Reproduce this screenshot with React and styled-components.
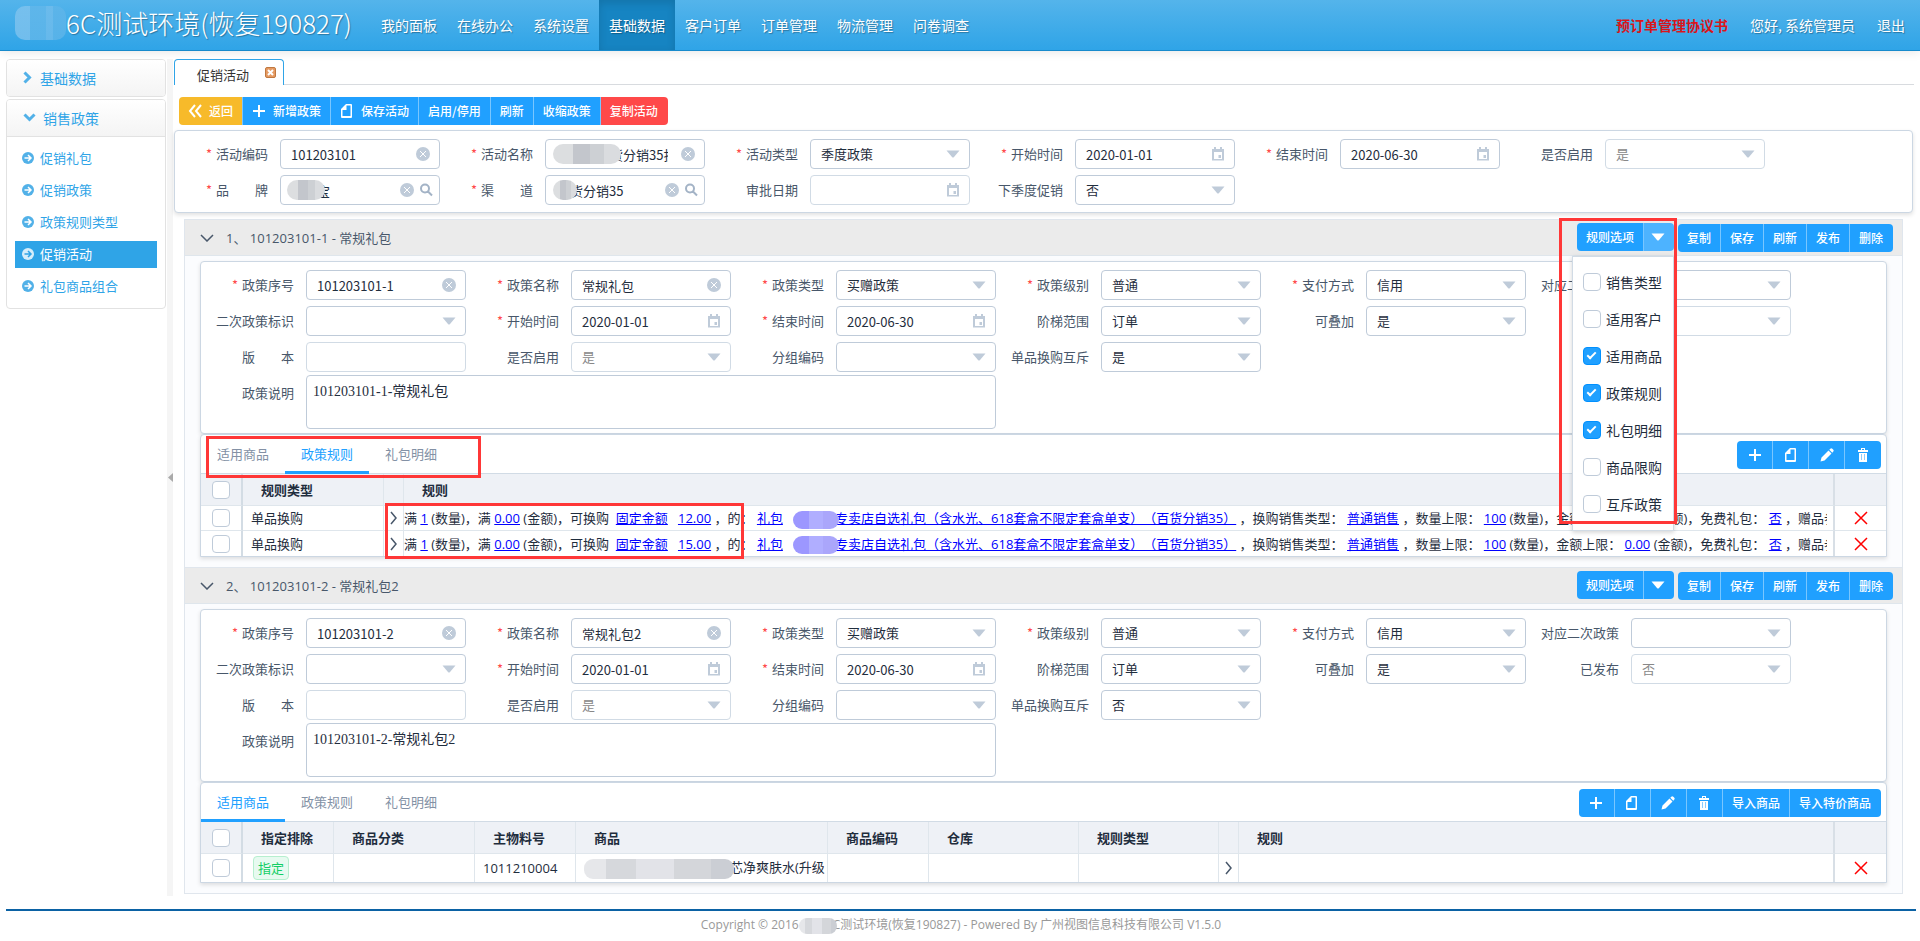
import React from "react";
import styled, { createGlobalStyle, css } from "styled-components";

const Global = createGlobalStyle`
  *, *::before, *::after { box-sizing: border-box; }
  body {
    margin: 0;
    background: #fff;
    color: #1f2d3d;
    font-family: "Noto Sans CJK SC", "Liberation Sans", sans-serif;
    font-size: 13px;
    line-height: 20px;
    text-spacing-trim: space-all;
  }
  button, input, select, textarea { font: inherit; color: inherit; margin: 0; }
  svg { display: block; flex: none; }
  ul { list-style: none; margin: 0; padding: 0; }
`;

const wideLatin = `"Open Sans", "Noto Sans CJK SC", sans-serif`;

/* ---------- header ---------- */
const Header = styled.header`
  display: flex;
  height: 51px;
  background: linear-gradient(#54b4eb, #2fa4e7);
  border-bottom: 1px solid #178acc;
  box-shadow: 0 1px 10px rgba(0, 0, 0, 0.1);
  color: #fff;
  font-size: 14px;
  text-shadow: 1px 1px 1px rgba(0, 0, 0, 0.3);
`;
const Brand = styled.div`
  display: flex;
  align-items: center;
  width: 371px;
  padding-left: 15px;
  padding-bottom: 4px;
  font-size: 26px;
  font-weight: 300;
  white-space: nowrap;
`;
const Nav = styled.nav`
  display: flex;
  flex: 1;
`;
const NavLink = styled.a`
  display: flex;
  align-items: center;
  padding: 0 10px;
  color: #fff;
  text-decoration: none;
  background: ${(p) => (p.$active ? "#1684c2" : "transparent")};
  box-shadow: ${(p) => (p.$active ? "inset 0 3px 8px rgba(0, 0, 0, 0.13)" : "none")};
`;
const UserBar = styled.div`
  display: flex;
  align-items: center;
  gap: 22px;
  padding-right: 15px;
  a { color: #fff; text-decoration: none; }
  a.notice { color: #d9151b; font-weight: bold; text-shadow: none; }
`;

/* ---------- frame ---------- */
const Frame = styled.div`
  display: flex;
  padding: 8px 6px 0;
`;
const Sidebar = styled.aside`
  width: 160px;
  flex: none;
`;
const SidePanel = styled.section`
  margin-bottom: 2px;
  border: 1px solid #e2e2e2;
  border-radius: 4px;
  overflow: hidden;
`;
const SideTitle = styled.a`
  display: flex;
  align-items: center;
  gap: ${(p) => (p.$open ? 7 : 8)}px;
  height: 36px;
  padding-left: 16px;
  padding-bottom: 1px;
  color: #2fa4e7;
  font-size: 14px;
  text-decoration: none;
  background: linear-gradient(#fff, #f4f4f4);
`;
const SideMenu = styled.ul`
  border-top: 1px solid #e2e2e2;
  padding: 8px 8px 3px;
`;
const SideLink = styled.a`
  display: flex;
  align-items: center;
  gap: 6px;
  height: 27px;
  margin: 0 0 5px;
  padding: 0 0 2px 7px;
  color: ${(p) => (p.$active ? "#fff" : "#2fa4e7")};
  background: ${(p) => (p.$active ? "#2fa4e7" : "transparent")};
  text-decoration: none;
`;
const Splitter = styled.div`
  display: flex;
  align-items: center;
  justify-content: center;
  width: 6px;
  margin: 0 1px;
  flex: none;
  background: #f5f5f5;
`;
const Content = styled.main`
  flex: 1;
  min-width: 0;
  padding-bottom: 2px;
`;
const TabBar = styled.div`
  display: flex;
  align-items: flex-end;
  border-bottom: 1px solid #d8dbdf;
`;
const PageTab = styled.div`
  display: flex;
  align-items: center;
  gap: 16px;
  height: 26px;
  margin-bottom: -1px;
  padding: 4px 7px 0 22px;
  background: #fff;
  border: 1px solid #2fa4e7;
  border-bottom: 0;
  border-radius: 4px 4px 0 0;
  color: #333;
`;
const TabClose = styled.button`
  display: flex;
  padding: 1px;
  margin-bottom: 4px;
  border: 1px solid #c07840;
  border-radius: 2px;
  background: #e59a62;
`;

/* ---------- buttons ---------- */
const Group = styled.div`
  display: inline-flex;
  flex: none;
  height: 28px;
  border-radius: 4px;
  overflow: hidden;
`;
const Button = styled.button`
  display: flex;
  align-items: center;
  justify-content: center;
  gap: 7px;
  padding: 0 ${(p) => (p.$iconOnly ? 0 : 9)}px;
  width: ${(p) => (p.$iconOnly ? "36px" : "auto")};
  border: 0;
  border-right: 1px solid #79c6ff;
  background: ${(p) => p.$color || "#20a0ff"};
  color: #fff;
  font-size: 12px;
  line-height: 20px;
  font-weight: 500;
  white-space: nowrap;
  &:last-child { border-right-color: transparent; }
`;
const Toolbar = styled.div`
  display: flex;
  padding: 12px 5px 5px;
`;

/* ---------- forms ---------- */
const Card = styled.div`
  border: 1px solid #ccd7e3;
  border-radius: 4px;
  background: #fff;
  box-shadow: 0 2px 4px rgba(0, 0, 0, 0.12);
`;
const FilterCard = styled(Card)`
  padding: 8px 0 7px;
  margin-right: 1px;
`;
const FormCard = styled(Card)`
  padding: 8px 0 4px;
`;
const FieldGrid = styled.div`
  display: grid;
  grid-template-columns: repeat(6, 265px);
  row-gap: 6px;
`;
const FieldBox = styled.div`
  display: flex;
  justify-content: flex-end;
  gap: 12px;
`;
const FieldLabel = styled.label`
  width: 104px;
  margin-left: -11px;
  text-align: right;
  line-height: 30px;
  color: #48576a;
  white-space: pre;
`;
const Star = styled.span`
  color: #ff4949;
  margin-right: 4px;
`;
const Control = styled.div`
  position: relative;
  width: 160px;
  height: 30px;
`;
const controlBase = css`
  appearance: none;
  display: block;
  width: 100%;
  height: 30px;
  padding: 0 36px 0 ${(p) => p.$indent || 10}px;
  border: 1px solid ${(p) => (p.disabled ? "#d1dbe5" : "#bfcbd9")};
  border-radius: 4px;
  background: #fff;
  color: ${(p) => (p.disabled ? "#888" : "#1f2d3d")};
  opacity: 1;
  outline: 0;
`;
const TextInput = styled.input`
  ${controlBase}
`;
const SelectBox = styled.select`
  ${controlBase}
`;
const Adorn = styled.span`
  position: absolute;
  top: 0;
  right: 7px;
  height: 30px;
  display: flex;
  align-items: center;
  gap: 2px;
  pointer-events: none;
`;
const NoteRow = styled.div`
  display: flex;
  gap: 12px;
  margin-top: 3px;
`;
const NoteLabel = styled(FieldLabel)`
  width: 93px;
  margin-left: 0;
  line-height: 36px;
`;
const Note = styled.textarea`
  display: block;
  width: 690px;
  height: 54px;
  padding: 5px 6px;
  border: 1px solid #bfcbd9;
  border-radius: 4px;
  resize: none;
  font-family: "Liberation Serif", "Noto Sans CJK SC", serif;
  font-size: 14px;
  line-height: 21px;
`;

/* censor patches */
const Patch = styled.span`
  position: absolute;
  left: ${(p) => p.$left}px;
  top: 5px;
  width: ${(p) => p.$width}px;
  height: 20px;
  border-radius: 10px;
  background: linear-gradient(90deg, #dcdee0 30%, #c3c6cc 30% 55%, #cdd0d4 55% 75%, #dadcdf 75%);
`;
const BrandPatch = styled.span`
  width: 51px;
  height: 34px;
  border-radius: 10px;
  background: linear-gradient(90deg, #80c3ee 30%, #62b7ea 30% 60%, #72bdec 60% 75%, #5fb5e9 75%);
  opacity: 0.8;
`;
const InlinePatch = styled.span`
  display: inline-block;
  position: relative;
  width: ${(p) => p.$width}px;
  height: ${(p) => p.$height}px;
  margin-right: -4px;
  vertical-align: middle;
  border-radius: 9px;
  background: ${(p) =>
    p.$grey
      ? "linear-gradient(90deg, #e6e7ea 15%, #d6d8dc 15% 35%, #e2e3e8 35% 60%, #d4d6da 60% 85%, #cbced4 85%)"
      : "linear-gradient(90deg, #9c97ff 35%, #b0aeff 35% 65%, #aaa6fb 65%)"};
`;

/* ---------- policies ---------- */
const PolicyList = styled.div`
  margin: 6px 11px 0 10px;
  border: 1px solid #e0e6ed;
  border-top: 0;
  background: #fbfcfe;
`;
const PolicyHead = styled.div`
  display: flex;
  align-items: center;
  height: 37px;
  padding: 0 9px 0 15px;
  border-top: 1px solid #e0e6ed;
  border-bottom: 1px solid #dfe6ec;
  background: #ebebeb;
  color: #48576a;
`;
const PolicyTitle = styled.h2`
  flex: 1;
  margin: 0 0 0 12px;
  font-family: ${wideLatin};
  font-size: 13px;
  font-weight: normal;
  white-space: pre;
`;
const SplitMenu = styled.div`
  position: relative;
  display: flex;
  margin: 0 4px 2px 0;
`;
const CaretButton = styled(Button)`
  width: 30px;
  padding: 0;
  background: ${(p) => (p.$open ? "#4db3ff" : "#20a0ff")};
`;
const OptionMenu = styled.ul`
  position: absolute;
  z-index: 3;
  top: 33px;
  right: 0;
  width: 102px;
  padding: 7px 0;
  border: 1px solid #d1dbe5;
  background: #fff;
  box-shadow: 0 2px 4px rgba(0, 0, 0, 0.12), 0 0 6px rgba(0, 0, 0, 0.06);
`;
const OptionLabel = styled.label`
  display: flex;
  align-items: center;
  gap: 5px;
  height: 37px;
  padding-left: 10px;
  color: #1f2d3d;
  font-size: 14px;
`;
const Check = styled.input.attrs({ type: "checkbox" })`
  appearance: none;
  position: relative;
  display: block;
  flex: none;
  width: 18px;
  height: 18px;
  border: 1px solid #bfcbd9;
  border-radius: 4px;
  background: #fff;
  &:checked { background: #20a0ff; border-color: #0190fe; }
  &:checked::after {
    content: "";
    position: absolute;
    left: 5px;
    top: 2px;
    width: 5px;
    height: 9px;
    border: solid #fff;
    border-width: 0 2px 2px 0;
    transform: rotate(45deg);
  }
`;
const Marker = styled.div`
  position: absolute;
  z-index: 4;
  left: ${(p) => p.$left}px;
  top: ${(p) => p.$top}px;
  width: ${(p) => p.$width}px;
  height: ${(p) => p.$height}px;
  border: 3px solid #ff3737;
  pointer-events: none;
`;
const PolicyBody = styled.div`
  padding: 5px 15px 10px;
`;
const DetailCard = styled(Card)`
  position: relative;
  border-bottom-left-radius: 0;
  border-bottom-right-radius: 0;
`;
const DetailTabs = styled.div`
  display: flex;
  height: 39px;
  padding-right: 5px;
  border-bottom: 1px solid #d1dbe5;
  ${Group} { margin: 6px 0 0 auto; }
`;
const DetailTab = styled.button`
  height: 39px;
  padding: 2px 16px 0;
  border: 0;
  border-bottom: 3px solid ${(p) => (p.$active ? "#20a0ff" : "transparent")};
  background: none;
  color: ${(p) => (p.$active ? "#20a0ff" : "#8391a5")};
`;

/* ---------- tables ---------- */
const Table = styled.table`
  width: 100%;
  table-layout: fixed;
  border-collapse: separate;
  border-spacing: 0;
  font-family: ${wideLatin};
  th, td {
    padding: 0 0 0 8px;
    text-align: left;
    white-space: nowrap;
    overflow: hidden;
    border-right: 1px solid #dfe6ec;
  }
  th {
    height: 32px;
    padding-left: 18px;
    background: #eef1f6;
    border-bottom: 1px solid #dfe6ec;
  }
  td {
    height: ${(p) => p.$row}px;
    border-bottom: 1px solid #dfe6ec;
  }
  tbody tr:last-child td { border-bottom: 0; }
  th:first-child, td:first-child { padding-left: 11px; border-right: 2px solid #d3dce4; }
  th:nth-last-child(2), td:nth-last-child(2) { border-right: 2px solid #d8dfe6; }
  th:last-child, td:last-child { border-right: 0; padding: 0; }
`;
const Rule = styled.div`
  margin-left: -8px;
  margin-right: 6px;
  overflow: hidden;
  white-space: pre;
  line-height: 22px;
  a { color: #00f; text-decoration: underline; }
`;
const Tag = styled.span`
  display: inline-block;
  height: 24px;
  margin-left: 2px;
  padding: 0 4px;
  border: 1px solid #b6efcf;
  border-radius: 4px;
  background: #e7faf0;
  color: #13ce66;
  line-height: 22px;
`;
const PlainButton = styled.button`
  display: flex;
  align-items: center;
  justify-content: center;
  width: 100%;
  padding: 0;
  border: 0;
  background: none;
`;
const Expander = styled(PlainButton)`
  width: 16px;
  margin-left: -6px;
`;

const Footer = styled.footer`
  margin: 13px 4px 0 6px;
  padding-top: 4px;
  border-top: 2px solid #0b62a4;
  text-align: center;
  color: #999;
  font-family: ${wideLatin};
  font-size: 12px;
`;

/* ---------- icons ---------- */
const Line = ({ d, w = 14, h = 14, color = "#fff", sw = 2, box }) => (
  <svg width={w} height={h} viewBox={box || `0 0 ${w} ${h}`} fill="none" stroke={color} strokeWidth={sw}>
    <path d={d} />
  </svg>
);
const ClearIcon = () => (
  <svg width="20" height="14" viewBox="-3 0 20 14">
    <circle cx="7" cy="7" r="7" fill="#bfcbd9" />
    <path d="M4 4l6 6M10 4l-6 6" stroke="#fff" strokeWidth="1" />
  </svg>
);
const SearchIcon = () => <Line w={14} h={14} color="#a3b3c6" sw={2} d="M10 5.500a4 4 0 1 1-8 0a4 4 0 1 1 8 0M9 8.500l4 4" />;
const CaretIcon = ({ color = "#bfcbd9" }) => (
  <svg width="20" height="8" viewBox="-3 0 20 8">
    <path d="M0.500 0.500h13L8 7q-1 1-2 0z" fill={color} />
  </svg>
);
const CalendarIcon = () => (
  <svg width="20" height="14" viewBox="-3 0 20 14">
    <path d="M1 2h12v11.500H1zM3 5v7h8V5z" fill="#bfcbd9" fillRule="evenodd" />
    <path d="M3 0h2v3H3zM9 0h2v3H9zM7.500 8H10v3H7.500z" fill="#bfcbd9" />
  </svg>
);
const BackIcon = () => <Line w={14} h={14} sw={2} d="M7 1L2 7l5 6M13 1L8 7l5 6" />;
const PlusIcon = () => <Line w={14} h={14} sw={2} d="M7 1v12M1 7h12" />;
const DocIcon = () => (
  <svg width="14" height="14" viewBox="0 0 14 14">
    <path d="M6 0h5q1 0 1 1v12q0 1-1 1H2q-1 0-1-1V5zM6.500 1.500V6H2.500v6h8V1.500z" fill="#fff" fillRule="evenodd" />
  </svg>
);
const PencilIcon = () => (
  <svg width="14" height="14" viewBox="0 0 14 14">
    <path d="M0.500 13.500l1-4L8.500 2.500l3 3L4.500 12.500zM9.300 1.700l1-1q1-1 2 0l1 1q.8.8 0 1.800l-1 1.200z" fill="#fff" />
  </svg>
);
const TrashIcon = () => (
  <svg width="14" height="14" viewBox="0 0 14 14">
    <path d="M5 0h4v2h3v2H2V2h3zM6 1v1h2V1zM3 5h8v9H3z" fill="#fff" fillRule="evenodd" />
    <path d="M5.500 6v6M8.500 6v6" stroke="#8ccdff" />
  </svg>
);
const ArrowDot = ({ active }) => (
  <svg width="12" height="12" viewBox="0 0 12 12">
    <circle cx="6" cy="6" r="6" fill={active ? "#d5edfa" : "#52b1e8"} />
    <path d="M2.500 6h6M6 3l3 3l-3 3" fill="none" stroke={active ? "#2fa4e7" : "#fff"} strokeWidth="1.500" />
  </svg>
);
const DownIcon = () => <Line w={14} h={8} color="#48576a" sw={1.5} d="M1 1l6 6l6-6" />;
const RightIcon = () => <Line w={8} h={14} color="#48576a" sw={1.5} d="M1 1l5 6l-5 6" />;
const CrossIcon = () => <Line w={14} h={14} color="#f00" sw={1.5} d="M1 1l12 12M13 1L1 13" />;

/* ---------- parts ---------- */
function Field({ id, label, req, type = "text", value = "", disabled, indent, patch }) {
  return (
    <FieldBox>
      <FieldLabel htmlFor={id}>
        {req && <Star>*</Star>}
        {label}
      </FieldLabel>
      <Control>
        {type === "select" ? (
          <SelectBox id={id} disabled={disabled}>
            <option>{value}</option>
          </SelectBox>
        ) : (
          <TextInput id={id} defaultValue={value} disabled={disabled} $indent={indent} />
        )}
        {patch && <Patch $left={patch[0]} $width={patch[1]} />}
        <Adorn>
          {(type === "clear" || type === "search") && <ClearIcon />}
          {type === "select" && <CaretIcon />}
          {type === "date" && <CalendarIcon />}
          {type === "search" && <SearchIcon />}
        </Adorn>
      </Control>
    </FieldBox>
  );
}

const filterFields = [
  { label: "活动编码", req: true, type: "clear", value: "101203101" },
  { label: "活动名称", req: true, type: "clear", value: "货分销35折", indent: 64, patch: [8, 68] },
  { label: "活动类型", req: true, type: "select", value: "季度政策" },
  { label: "开始时间", req: true, type: "date", value: "2020-01-01" },
  { label: "结束时间", req: true, type: "date", value: "2020-06-30" },
  { label: "是否启用", type: "select", value: "是", disabled: true },
  { label: "品　　牌", req: true, type: "search", value: "宝", indent: 36, patch: [7, 38] },
  { label: "渠　　道", req: true, type: "search", value: "货分销35", indent: 24, patch: [8, 24] },
  { label: "审批日期", type: "date", disabled: true },
  { label: "下季度促销", type: "select", value: "否" },
];

const policyFields = (no, name, exclusive) => [
  { label: "政策序号", req: true, type: "clear", value: no },
  { label: "政策名称", req: true, type: "clear", value: name },
  { label: "政策类型", req: true, type: "select", value: "买赠政策" },
  { label: "政策级别", req: true, type: "select", value: "普通" },
  { label: "支付方式", req: true, type: "select", value: "信用" },
  { label: "对应二次政策", type: "select" },
  { label: "二次政策标识", type: "select" },
  { label: "开始时间", req: true, type: "date", value: "2020-01-01" },
  { label: "结束时间", req: true, type: "date", value: "2020-06-30" },
  { label: "阶梯范围", type: "select", value: "订单" },
  { label: "可叠加", type: "select", value: "是" },
  { label: "已发布", type: "select", value: "否", disabled: true },
  { label: "版　　本", disabled: true },
  { label: "是否启用", type: "select", value: "是", disabled: true },
  { label: "分组编码", type: "select" },
  { label: "单品换购互斥", type: "select", value: exclusive },
];

const ruleOptions = [
  ["销售类型", false],
  ["适用客户", false],
  ["适用商品", true],
  ["政策规则", true],
  ["礼包明细", true],
  ["商品限购", false],
  ["互斥政策", false],
];

function Policy({ index, no, name, exclusive, open, tab, extra, marker, children }) {
  return (
    <section>
      <PolicyHead>
        <DownIcon />
        <PolicyTitle>{`${index}、 ${no} - ${name}`}</PolicyTitle>
        <SplitMenu>
          <Group>
            <Button>规则选项</Button>
            <CaretButton $open={open} aria-label="展开规则选项">
              <CaretIcon color="#fff" />
            </CaretButton>
          </Group>
          {open && (
            <>
              <OptionMenu>
                {ruleOptions.map(([text, on]) => (
                  <li key={text}>
                    <OptionLabel>
                      <Check defaultChecked={on} />
                      {text}
                    </OptionLabel>
                  </li>
                ))}
              </OptionMenu>
              <Marker $left={-18} $top={-5} $width={118} $height={306} />
            </>
          )}
        </SplitMenu>
        <Group>
          {["复制", "保存", "刷新", "发布", "删除"].map((t) => (
            <Button key={t}>{t}</Button>
          ))}
        </Group>
      </PolicyHead>
      <PolicyBody>
        <FormCard as="form">
          <FieldGrid>
            {policyFields(no, name, exclusive).map((f) => (
              <Field key={f.label} id={`p${index}-${f.label}`} {...f} />
            ))}
          </FieldGrid>
          <NoteRow>
            <NoteLabel htmlFor={`note${index}`}>政策说明</NoteLabel>
            <Note id={`note${index}`} defaultValue={`${no}-${name}`} />
          </NoteRow>
        </FormCard>
        <DetailCard>
          <DetailTabs>
            {["适用商品", "政策规则", "礼包明细"].map((t) => (
              <DetailTab key={t} $active={t === tab}>{t}</DetailTab>
            ))}
            <Group>
              <Button $iconOnly aria-label="新增"><PlusIcon /></Button>
              <Button $iconOnly aria-label="保存"><DocIcon /></Button>
              <Button $iconOnly aria-label="编辑"><PencilIcon /></Button>
              <Button $iconOnly aria-label="删除"><TrashIcon /></Button>
              {extra?.map((t) => <Button key={t}>{t}</Button>)}
            </Group>
          </DetailTabs>
          {children}
          {marker && (
            <>
              <Marker $left={5} $top={1} $width={275} $height={42} />
              <Marker $left={184} $top={68} $width={359} $height={56} />
            </>
          )}
        </DetailCard>
      </PolicyBody>
    </section>
  );
}

const L = ({ children }) => <a href="#rule">{children}</a>;

function RuleRow({ price }) {
  return (
    <tr>
      <td><Check aria-label="选择" /></td>
      <td>单品换购</td>
      <td><Expander aria-label="展开"><RightIcon /></Expander></td>
      <td>
        <Rule>
          满 <L>1</L> (数量)，满 <L>0.00</L> (金额)，可换购{"  "}<L>固定金额</L>{"   "}<L>{price}</L> ，的：{" "}
          <L>礼包</L>{"   "}
          <L><InlinePatch $width={46} $height={18} />专卖店自选礼包（含水光、618套盒不限定套盒单支）（百货分销35）</L>
          {" "}，换购销售类型：{" "}<L>普通销售</L> ，数量上限：{" "}<L>100</L> (数量)，金额上限：{" "}
          <L>0.00</L> (金额)，免费礼包：{" "}<L>否</L> ，赠品参与
        </Rule>
      </td>
      <td><PlainButton aria-label="删除"><CrossIcon /></PlainButton></td>
    </tr>
  );
}

const Cols = ({ widths }) => (
  <colgroup>
    {widths.map((w, i) => <col key={i} width={w || undefined} />)}
  </colgroup>
);

const sideItems = ["促销礼包", "促销政策", "政策规则类型", "促销活动", "礼包商品组合"];
const navItems = ["我的面板", "在线办公", "系统设置", "基础数据", "客户订单", "订单管理", "物流管理", "问卷调查"];

export default function App() {
  return (
    <>
      <Global />
      <Header>
        <Brand><BrandPatch />6C测试环境(恢复190827)</Brand>
        <Nav>
          {navItems.map((t) => (
            <NavLink key={t} href="#nav" $active={t === "基础数据"}>{t}</NavLink>
          ))}
        </Nav>
        <UserBar>
          <a className="notice" href="#protocol">预订单管理协议书</a>
          <span>您好, 系统管理员</span>
          <a href="#logout">退出</a>
        </UserBar>
      </Header>

      <Frame>
        <Sidebar>
          <SidePanel>
            <SideTitle href="#base">
              <Line w={9} h={13} color="#52b1e8" sw={3} d="M1.500 1.500l5 5l-5 5" />
              基础数据
            </SideTitle>
          </SidePanel>
          <SidePanel>
            <SideTitle href="#sales" $open>
              <Line w={13} h={9} color="#52b1e8" sw={3} d="M1.500 1.500l5 5l5-5" />
              销售政策
            </SideTitle>
            <SideMenu>
              {sideItems.map((t) => (
                <li key={t}>
                  <SideLink href="#item" $active={t === "促销活动"}>
                    <ArrowDot active={t === "促销活动"} />
                    {t}
                  </SideLink>
                </li>
              ))}
            </SideMenu>
          </SidePanel>
        </Sidebar>
        <Splitter>
          <svg width="5" height="9" viewBox="0 0 5 9"><path d="M5 0v9L0 4.500z" fill="#aaa" /></svg>
        </Splitter>

        <Content>
          <TabBar>
            <PageTab>
              促销活动
              <TabClose aria-label="关闭"><Line w={7} h={7} sw={2} d="M1 1l5 5M6 1l-5 5" /></TabClose>
            </PageTab>
          </TabBar>
          <Toolbar>
            <Group>
              <Button $color="#f7ba2a"><BackIcon />返回</Button>
              <Button><PlusIcon />新增政策</Button>
              <Button><DocIcon />保存活动</Button>
              <Button>启用/停用</Button>
              <Button>刷新</Button>
              <Button>收缩政策</Button>
              <Button $color="#ff4949">复制活动</Button>
            </Group>
          </Toolbar>
          <FilterCard as="form">
            <FieldGrid>
              {filterFields.map((f) => <Field key={f.label} id={`f-${f.label}`} {...f} />)}
            </FieldGrid>
          </FilterCard>

          <PolicyList>
            <Policy index={1} no="101203101-1" name="常规礼包" exclusive="是" open tab="政策规则" marker>
              <Table $row={25}>
                <Cols widths={[42, 141, 20, 0, 51]} />
                <thead>
                  <tr>
                    <th><Check aria-label="全选" /></th>
                    <th>规则类型</th>
                    <th />
                    <th>规则</th>
                    <th />
                  </tr>
                </thead>
                <tbody>
                  <RuleRow price="12.00" />
                  <RuleRow price="15.00" />
                </tbody>
              </Table>
            </Policy>
            <Policy
              index={2}
              no="101203101-2"
              name="常规礼包2"
              exclusive="否"
              tab="适用商品"
              extra={["导入商品", "导入特价商品"]}
            >
              <Table $row={28}>
                <Cols widths={[42, 91, 141, 101, 252, 101, 150, 140, 20, 0, 51]} />
                <thead>
                  <tr>
                    <th><Check aria-label="全选" /></th>
                    <th>指定排除</th>
                    <th>商品分类</th>
                    <th>主物料号</th>
                    <th>商品</th>
                    <th>商品编码</th>
                    <th>仓库</th>
                    <th>规则类型</th>
                    <th />
                    <th>规则</th>
                    <th />
                  </tr>
                </thead>
                <tbody>
                  <tr>
                    <td><Check aria-label="选择" /></td>
                    <td><Tag>指定</Tag></td>
                    <td />
                    <td>1011210004</td>
                    <td><InlinePatch $grey $width={150} $height={20} />芯净爽肤水(升级</td>
                    <td />
                    <td />
                    <td />
                    <td><Expander aria-label="展开"><RightIcon /></Expander></td>
                    <td />
                    <td><PlainButton aria-label="删除"><CrossIcon /></PlainButton></td>
                  </tr>
                </tbody>
              </Table>
            </Policy>
          </PolicyList>
        </Content>
      </Frame>
      <Footer>
        Copyright © 2016<InlinePatch $grey $width={38} $height={16} />C测试环境(恢复190827) - Powered By 广州视图信息科技有限公司 V1.5.0
      </Footer>
    </>
  );
}
